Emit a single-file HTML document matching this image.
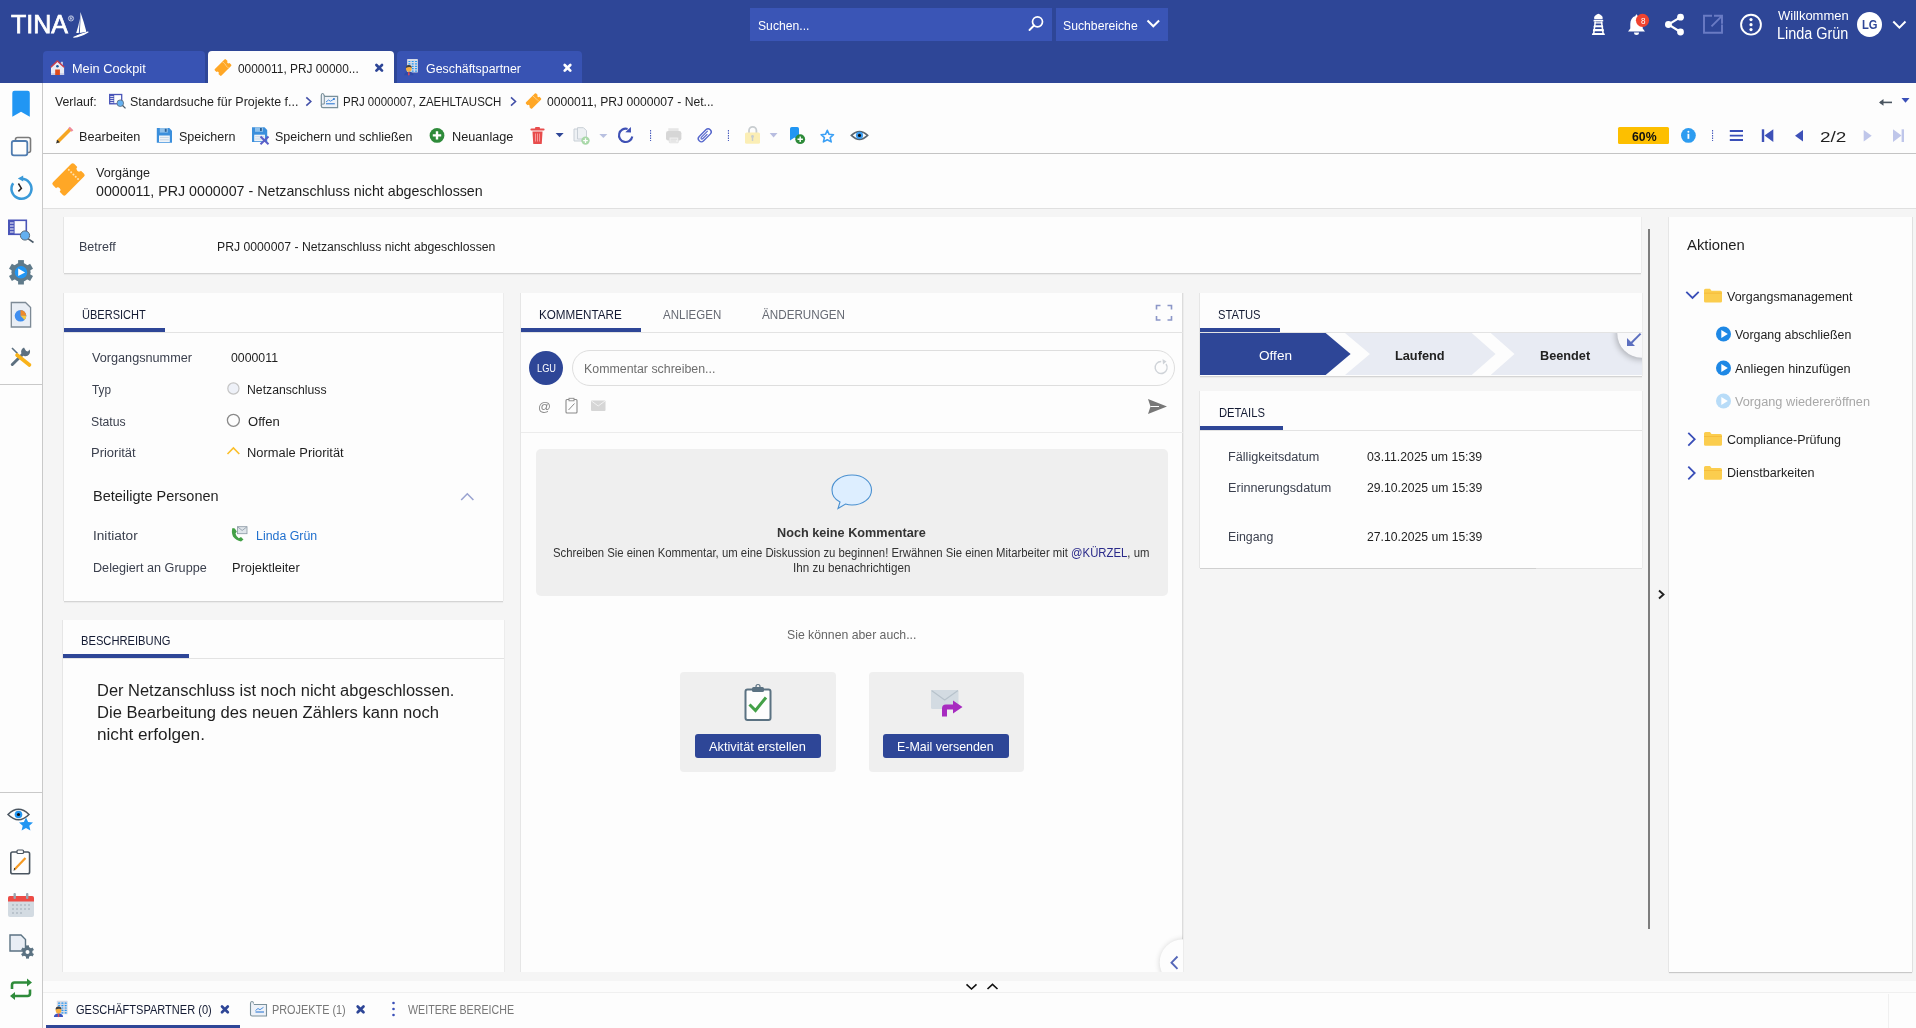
<!DOCTYPE html>
<html><head><meta charset="utf-8">
<style>
*{box-sizing:border-box;margin:0;padding:0}
html,body{width:1916px;height:1028px;overflow:hidden;background:#f5f5f5;font-family:"Liberation Sans",sans-serif;color:#1f1f1f}
.a{position:absolute;white-space:nowrap}
.b{position:absolute}
.card{position:absolute;background:#fdfdfd;box-shadow:-1px 0 0 #e6e6e6,1px 0 0 #ececec,0 1px 0 #d4d4d4,0 2px 1px rgba(0,0,0,.04)}
.sep{position:absolute;height:1px;background:#e3e3e3}
.ul{position:absolute;height:4px;background:#2e4697}
svg.a{overflow:visible}
.card.nb{box-shadow:-1px 0 0 #e6e6e6,1px 0 0 #ececec}
</style></head><body>
<div class="b" style="left:0;top:0;width:1916px;height:83px;background:#2e4697"></div>
<div class="b" style="left:750px;top:8px;width:302px;height:33px;background:#3a55b6"></div>
<div class="b" style="left:1056px;top:8px;width:112px;height:33px;background:#3a55b6"></div>
<div class="b" style="left:43px;top:51px;width:162px;height:32px;background:#3853b3;border-radius:4px 4px 0 0"></div>
<div class="b" style="left:208px;top:51px;width:186px;height:32px;background:#fdfdfd;border-radius:4px 4px 0 0"></div>
<div class="b" style="left:397px;top:51px;width:185px;height:32px;background:#3853b3;border-radius:4px 4px 0 0"></div>
<div class="b" style="left:0;top:83px;width:42px;height:945px;background:#fdfdfd"></div>
<div class="b" style="left:42px;top:83px;width:1px;height:945px;background:#c9c9c9"></div>
<div class="b" style="left:0;top:384px;width:42px;height:1px;background:#c9c9c9"></div>
<div class="b" style="left:0;top:792px;width:42px;height:1px;background:#c9c9c9"></div>
<div class="b" style="left:43px;top:83px;width:1873px;height:125px;background:#fdfdfd"></div>
<div class="b" style="left:43px;top:153px;width:1873px;height:1px;background:#c4c4c4"></div>
<div class="b" style="left:43px;top:208px;width:1873px;height:1px;background:#e0e0e0"></div>
<!-- betreff -->
<div class="card" style="left:64px;top:217px;width:1577px;height:56px"></div>
<!-- uebersicht -->
<div class="card" style="left:64px;top:293px;width:439px;height:308px"></div>
<div class="sep" style="left:64px;top:332px;width:439px"></div>
<div class="ul" style="left:64px;top:328px;width:101px"></div>
<!-- beschreibung -->
<div class="card nb" style="left:63px;top:620px;width:441px;height:352px"></div>
<div class="sep" style="left:63px;top:658px;width:441px"></div>
<div class="ul" style="left:63px;top:654px;width:126px"></div>
<!-- kommentare -->
<div class="card nb" style="left:521px;top:293px;width:662px;height:679px;border-right:1px solid #dcdcdc"></div>
<div class="sep" style="left:521px;top:332px;width:662px"></div>
<div class="ul" style="left:521px;top:328px;width:120px"></div>
<div class="b" style="left:572px;top:350px;width:603px;height:36px;border:1px solid #dedede;border-radius:18px;background:#fdfdfd"></div>
<div class="sep" style="left:521px;top:432px;width:662px;background:#ececec"></div>
<div class="b" style="left:536px;top:449px;width:632px;height:147px;background:#efefef;border-radius:5px"></div>
<div class="b" style="left:680px;top:672px;width:156px;height:100px;background:#efefef;border-radius:4px"></div>
<div class="b" style="left:869px;top:672px;width:155px;height:100px;background:#efefef;border-radius:4px"></div>
<div class="b" style="left:695px;top:734px;width:126px;height:24px;background:#2e4697;border-radius:3px"></div>
<div class="b" style="left:883px;top:734px;width:126px;height:24px;background:#2e4697;border-radius:3px"></div>
<!-- status -->
<div class="card" style="left:1200px;top:293px;width:442px;height:83px"></div>
<div class="sep" style="left:1200px;top:332px;width:442px"></div>
<div class="ul" style="left:1200px;top:328px;width:80px"></div>
<!-- details -->
<div class="card" style="left:1200px;top:391px;width:442px;height:177px;box-shadow:-1px 0 0 #e6e6e6,1px 0 0 #ececec,0 1px 0 #e2e2e2"></div>
<div class="b" style="left:1200px;top:568px;width:336px;height:1px;background:#d0d0d0"></div>
<div class="sep" style="left:1200px;top:430px;width:442px"></div>
<div class="ul" style="left:1200px;top:426px;width:83px"></div>
<!-- splitter -->
<div class="b" style="left:1648px;top:229px;width:2px;height:700px;background:#7d7d7d"></div>
<!-- aktionen -->
<div class="card" style="left:1669px;top:217px;width:243px;height:755px;box-shadow:-1px 0 0 #e6e6e6,1px 0 0 #e0e0e0,0 1px 1px rgba(0,0,0,.18)"></div>
<!-- bottom -->
<div class="b" style="left:43px;top:981px;width:1873px;height:11px;background:#fcfcfc"></div>
<div class="b" style="left:43px;top:992px;width:1873px;height:1px;background:#f0f0f0"></div>
<div class="b" style="left:43px;top:993px;width:1873px;height:35px;background:#fdfdfd"></div>
<div class="b" style="left:46px;top:1025px;width:194px;height:3px;background:#2e4697"></div>
<div class="b" style="left:1888px;top:994px;width:1px;height:34px;background:#f0f0f0"></div>
<svg class="b" style="left:0;top:0" width="1916" height="1028" viewBox="0 0 1916 1028"><path d="M80.4 12 Q84 22 86.4 31.8 L79.8 33.1 Q80.6 22 80.4 12Z" fill="#fff"/>
<path d="M79.9 18.5 Q78.5 26 76.2 33.1 L78.8 33 Q79.6 26 79.9 18.5Z" fill="#fff"/>
<path d="M73.8 37.2 Q81 36.5 88 32 Q80 34.3 73.8 37.2Z" fill="#fff" stroke="#fff" stroke-width="1.1" stroke-linejoin="round"/>
<circle cx="71" cy="18.4" r="2.6" fill="none" stroke="#e8ecf8" stroke-width="0.7"/><path d="M70.2 20 V16.9 H71.5 Q72.4 16.9 72.4 17.7 Q72.4 18.5 71.5 18.5 H70.2 M71.4 18.5 L72.4 20" fill="none" stroke="#e8ecf8" stroke-width="0.6"/>
<circle cx="1037.5" cy="21.8" r="5" fill="none" stroke="#fff" stroke-width="1.7"/><path d="M1034 25.5 L1029.5 30" stroke="#fff" stroke-width="1.9" stroke-linecap="round"/>
<path d="M1147.5 20.5 L1153.3 26.3 L1159.1 20.5" fill="none" stroke="#fff" stroke-width="2"/>
<g fill="#fff"><path d="M1598.4 13.8 Q1602.3 15.2 1602.6 17.5 L1602.6 19.2 H1594.2 L1594.2 17.5 Q1594.5 15.2 1598.4 13.8Z"/>
<rect x="1593.6" y="19.9" width="9.6" height="1.6"/>
<path d="M1594.6 22.3 H1602.2 L1602.6 23.5 H1594.2Z"/><path d="M1594 25.3 H1602.8 L1603.3 27.3 H1593.5Z"/><path d="M1593.3 29 H1603.5 L1604 31.2 H1592.8Z"/><path d="M1592.6 33 H1604.2 L1605 35.1 H1591.8Z"/>
<path d="M1594.6 21.5 L1596.1 21.5 L1594.3 35 L1592.7 35Z"/><path d="M1602.2 21.5 L1600.7 21.5 L1602.5 35 L1604.1 35Z"/></g>
<path d="M1636.5 14.5 C1636 14.5 1635.5 15 1635.5 16 C1632 17 1630.3 20 1630.3 24 L1630.3 28.5 L1628 31.5 L1645 31.5 L1642.7 28.5 L1642.7 24 C1642.7 20 1641 17 1637.5 16 C1637.5 15 1637 14.5 1636.5 14.5Z" fill="#fff"/>
<path d="M1634 32.5 A2.5 2.5 0 0 0 1639 32.5Z" fill="#fff"/>
<circle cx="1642.5" cy="20.3" r="6.6" fill="#f0432f"/>
<g fill="#fff"><circle cx="1680.5" cy="17.2" r="3.4"/><circle cx="1668.4" cy="24.5" r="3.4"/><circle cx="1680.5" cy="32" r="3.4"/></g><path d="M1680.5 17.2 L1668.4 24.5 L1680.5 32" fill="none" stroke="#fff" stroke-width="2.1"/>
<path d="M1712 15.8 H1704 V32.7 H1722 V24.5" fill="none" stroke="#6a7bc4" stroke-width="1.9"/><path d="M1714 15.8 H1722 V23.8 M1722 15.8 L1711.5 26.3" fill="none" stroke="#6a7bc4" stroke-width="1.9"/>
<circle cx="1751" cy="24.7" r="9.9" fill="none" stroke="#fff" stroke-width="1.9"/><g fill="#fff"><circle cx="1751" cy="19.6" r="1.6"/><circle cx="1751" cy="24.7" r="1.6"/><circle cx="1751" cy="29.6" r="1.6"/></g>
<circle cx="1869.5" cy="24.5" r="12.5" fill="#fff"/>
<path d="M1893.3 21.5 L1899.4 27.6 L1905.5 21.5" fill="none" stroke="#fff" stroke-width="2"/>
<rect x="60.8" y="61.8" width="2.1" height="3.5" fill="#c5cde8"/>
<path d="M51 67.2 L57.4 61.2 L64.1 67.2 V75 H51Z" fill="#e8ebf5"/>
<path d="M50.8 67.2 L57.4 61 L64.2 67.2" fill="none" stroke="#c63e4c" stroke-width="1.5" stroke-linejoin="round"/>
<rect x="51" y="73.2" width="13.1" height="1.8" fill="#c8cde6"/>
<rect x="55.2" y="69.5" width="4.7" height="5.5" fill="#de4a1c"/><circle cx="57.4" cy="66.3" r="1.3" fill="#1a5a9a"/>
<g transform="translate(223,67.5) rotate(-45) scale(0.52)">
<path d="M-13 -9 H13 A2 2 0 0 1 15 -7 V-2.6 A2.6 2.6 0 0 0 15 2.6 V7 A2 2 0 0 1 13 9 H-13 A2 2 0 0 1 -15 7 V2.6 A2.6 2.6 0 0 0 -15 -2.6 V-7 A2 2 0 0 1 -13 -9Z" fill="#ffa726"/>
<g fill="#ffe2b0"><circle cx="7" cy="-6.5" r="1"/><circle cx="7" cy="-3.2" r="1"/><circle cx="7" cy="0" r="1"/><circle cx="7" cy="3.2" r="1"/><circle cx="7" cy="6.5" r="1"/></g></g>
<path d="M376.4 65 L382 70.6 M382 65 L376.4 70.6" stroke="#2e4697" stroke-width="2.7" stroke-linecap="round"/>
<rect x="407.1" y="59.1" width="10.8" height="13.5" rx="0.6" fill="#d5dae6"/><rect x="408.3" y="60.9" width="2.2" height="1.2" rx="0.6" fill="#2196f3"/><rect x="411.6" y="60.9" width="2.2" height="1.2" rx="0.6" fill="#2196f3"/><rect x="414.9" y="60.9" width="2.2" height="1.2" rx="0.6" fill="#2196f3"/><rect x="408.3" y="63.3" width="2.2" height="1.2" rx="0.6" fill="#2196f3"/><rect x="411.6" y="63.3" width="2.2" height="1.2" rx="0.6" fill="#2196f3"/><rect x="414.9" y="63.3" width="2.2" height="1.2" rx="0.6" fill="#2196f3"/><rect x="408.3" y="65.7" width="2.2" height="1.2" rx="0.6" fill="#2196f3"/><rect x="411.6" y="65.7" width="2.2" height="1.2" rx="0.6" fill="#2196f3"/><rect x="414.9" y="65.7" width="2.2" height="1.2" rx="0.6" fill="#2196f3"/><rect x="408.3" y="68.1" width="2.2" height="1.2" rx="0.6" fill="#2196f3"/><rect x="411.6" y="68.1" width="2.2" height="1.2" rx="0.6" fill="#2196f3"/><rect x="414.9" y="68.1" width="2.2" height="1.2" rx="0.6" fill="#2196f3"/><rect x="408.3" y="70.5" width="2.2" height="1.2" rx="0.6" fill="#2196f3"/><rect x="411.6" y="70.5" width="2.2" height="1.2" rx="0.6" fill="#2196f3"/><rect x="414.9" y="70.5" width="2.2" height="1.2" rx="0.6" fill="#2196f3"/><path d="M404.2 75.3 Q404.2 71.7 408.8 71.7 Q413.40000000000003 71.7 413.40000000000003 75.3Z" fill="#2f4aa8"/><path d="M408.2 71.9 H409.40000000000003 L409.7 74.9 L408.8 75.5 L407.90000000000003 74.9Z" fill="#d94a5a"/><ellipse cx="408.8" cy="68.5" rx="2.8" ry="3.2" fill="#f8b040"/><path d="M405.90000000000003 67.9 Q405.8 64.9 408.8 64.9 Q411.8 64.9 411.7 67.9 Q409.8 66.3 405.90000000000003 67.9Z" fill="#3a3f48"/>
<path d="M564.7 65 L570.3 70.6 M570.3 65 L564.7 70.6" stroke="#fff" stroke-width="2.7" stroke-linecap="round"/>
<path d="M12.3 93 Q12.3 90.8 14.5 90.8 H27.6 Q29.8 90.8 29.8 93 V116.7 L21 111.8 L12.3 116.7Z" fill="#2196f3"/>
<rect x="15.5" y="137.5" width="15" height="15" rx="2" fill="none" stroke="#7a7a7a" stroke-width="1.6"/><rect x="11.8" y="141" width="15.5" height="14.3" rx="2" fill="#fdfdfd" stroke="#4f7cb0" stroke-width="1.8"/>
<path d="M21.5 178.8 A10 10 0 1 1 13.2 183.2" fill="none" stroke="#3a9ad9" stroke-width="2.5"/><path d="M17.8 178.6 L23.2 175.6 L23.2 181.6Z" fill="#3a9ad9"/><path d="M18.4 183.5 L21.4 188.4 L18.4 191.4" fill="none" stroke="#2a2222" stroke-width="1.5"/>
<rect x="8.8" y="220.3" width="17.5" height="14" fill="#fdfdfd" stroke="#4a55b8" stroke-width="1.6"/><rect x="8.8" y="220.3" width="5.8" height="14" fill="#4a55b8"/>
<g stroke="#fdfdfd" stroke-width="1"><path d="M10 223 H13.6 M10 226 H13.6 M10 229 H13.6 M10 232 H13.6"/></g>
<circle cx="25" cy="235.5" r="4.6" fill="#64b0f0" stroke="#5a6a78" stroke-width="1"/><path d="M28.3 238.8 L33.5 242.5" stroke="#4a5a68" stroke-width="1.6"/>
<circle cx="21" cy="272.3" r="9.6" fill="#5f7a8a"/><rect x="18.1" y="260.1" width="5.8" height="12.2" fill="#5f7a8a" transform="rotate(0.0 21 272.3)"/><rect x="18.1" y="260.1" width="5.8" height="12.2" fill="#5f7a8a" transform="rotate(60.0 21 272.3)"/><rect x="18.1" y="260.1" width="5.8" height="12.2" fill="#5f7a8a" transform="rotate(120.0 21 272.3)"/><rect x="18.1" y="260.1" width="5.8" height="12.2" fill="#5f7a8a" transform="rotate(180.0 21 272.3)"/><rect x="18.1" y="260.1" width="5.8" height="12.2" fill="#5f7a8a" transform="rotate(240.0 21 272.3)"/><rect x="18.1" y="260.1" width="5.8" height="12.2" fill="#5f7a8a" transform="rotate(300.0 21 272.3)"/>
<circle cx="21" cy="272.3" r="6.2" fill="#2196f3"/><path d="M18.2 268.6 L25.1 272.4 L18.2 276.1Z" fill="#fff"/>
<path d="M11.3 302.5 H25.5 L30.6 307.6 V327 H11.3Z" fill="#e9eef5" stroke="#7d8a96" stroke-width="1.3"/><circle cx="20.5" cy="315.8" r="5.8" fill="#3f8ef0"/><path d="M20.5 315.8 V310 A5.8 5.8 0 0 1 26.3 315.8Z" fill="#ef8a2a"/><path d="M20.5 315.8 H26.3 A5.8 5.8 0 0 1 24.6 319.9Z" fill="#f7c940"/>
<path d="M12 348 L17.5 353.5" stroke="#5d7080" stroke-width="1.6"/><path d="M18 354 L12.5 364.5" stroke="#5d7080" stroke-width="0"/><path d="M29.5 349.5 A4.5 4.5 0 1 1 24 347.5 L26 351 L28 351.5Z" fill="#5d7080"/><path d="M25 352 L12.3 364.5" stroke="#5d7080" stroke-width="3" stroke-linecap="round"/><path d="M17 355 L29.5 365" stroke="#f9b31a" stroke-width="3.6" stroke-linecap="round"/>
<path d="M8 814.5 Q18.5 804 29 814.5 Q18.5 825 8 814.5Z" fill="#fdfdfd" stroke="#4a5560" stroke-width="1.5"/><circle cx="18.5" cy="814.5" r="3.8" fill="#2196f3"/><circle cx="18.5" cy="814.5" r="1.6" fill="#111"/>
<path d="M26 817.5 L28.1 822.1 L33 822.5 L29.3 825.8 L30.4 830.6 L26 828.1 L21.6 830.6 L22.7 825.8 L19 822.5 L23.9 822.1Z" fill="#2196f3"/>
<rect x="10.8" y="852" width="18.8" height="21.8" rx="1.8" fill="#fdfdfd" stroke="#4a5560" stroke-width="1.6"/><rect x="17" y="850" width="6.5" height="3.5" rx="1" fill="#fdfdfd" stroke="#4a5560" stroke-width="1.2"/><path d="M14.5 869.5 L25.5 858" stroke="#f59a23" stroke-width="2.2"/><path d="M14 870.5 L14.8 868" stroke="#333" stroke-width="1"/>
<rect x="8" y="896" width="26" height="21" rx="2" fill="#d3dbe2"/><path d="M8 898 Q8 896 10 896 H32 Q34 896 34 898 V901.5 H8Z" fill="#ee4b45"/><rect x="13.5" y="893" width="2.4" height="6" rx="1" fill="#9aa5b0"/><rect x="26" y="893" width="2.4" height="6" rx="1" fill="#9aa5b0"/><g fill="#9aa5b0"><circle cx="13" cy="905" r=".8"/><circle cx="17" cy="905" r=".8"/><circle cx="21" cy="905" r=".8"/><circle cx="25" cy="905" r=".8"/><circle cx="29" cy="905" r=".8"/><circle cx="13" cy="909" r=".8"/><circle cx="17" cy="909" r=".8"/><circle cx="21" cy="909" r=".8"/><circle cx="25" cy="909" r=".8"/><circle cx="29" cy="909" r=".8"/><circle cx="13" cy="913" r=".8"/><circle cx="17" cy="913" r=".8"/><circle cx="21" cy="913" r=".8"/></g>
<path d="M10 935 H21 L25.5 939.5 V951 H10Z" fill="#e9eef5" stroke="#5b7282" stroke-width="1.4"/>
<circle cx="27.5" cy="952" r="5.0" fill="#5b7282"/><rect x="26.0" y="945.4" width="3.0" height="6.6" fill="#5b7282" transform="rotate(0.0 27.5 952)"/><rect x="26.0" y="945.4" width="3.0" height="6.6" fill="#5b7282" transform="rotate(60.0 27.5 952)"/><rect x="26.0" y="945.4" width="3.0" height="6.6" fill="#5b7282" transform="rotate(120.0 27.5 952)"/><rect x="26.0" y="945.4" width="3.0" height="6.6" fill="#5b7282" transform="rotate(180.0 27.5 952)"/><rect x="26.0" y="945.4" width="3.0" height="6.6" fill="#5b7282" transform="rotate(240.0 27.5 952)"/><rect x="26.0" y="945.4" width="3.0" height="6.6" fill="#5b7282" transform="rotate(300.0 27.5 952)"/>
<circle cx="27.5" cy="952" r="2" fill="#fdfdfd"/>
<path d="M12 989 V985 Q12 982.5 14.5 982.5 H28" fill="none" stroke="#2e8b3a" stroke-width="2.6"/><path d="M27 978.5 L32 982.5 L27 986.5Z" fill="#2e8b3a"/><path d="M30 989.5 V993.5 Q30 996 27.5 996 H14" fill="none" stroke="#2e8b3a" stroke-width="2.6"/><path d="M15 992 L10 996 L15 1000Z" fill="#2e8b3a"/>
<rect x="109.7" y="94.5" width="12" height="9.3" fill="#fdfdfd" stroke="#4a55b8" stroke-width="1.3"/><rect x="109.7" y="94.5" width="4.5" height="9.3" fill="#4a55b8"/>
<g stroke="#fdfdfd" stroke-width=".8"><path d="M110.3 96.5 H113.5 M110.3 98.5 H113.5 M110.3 100.5 H113.5 M110.3 102.5 H113.5"/></g>
<circle cx="120.3" cy="103.2" r="3.3" fill="#64b0f0" stroke="#5a6a78" stroke-width=".8"/><path d="M122.6 105.5 L125.5 108.4" stroke="#4a5a68" stroke-width="1.2"/>
<path d="M306.3 97.3 L310.8 101.5 L306.3 105.6" fill="none" stroke="#4350a8" stroke-width="1.6"/>
<path d="M324 95.5 Q324 93.5 322.5 93.5 Q321.3 93.5 321.3 95.5 V106 Q321.3 107.6 323 107.6 H337.6 V96.3 H324.3" fill="#eef2f8" stroke="#7a909a" stroke-width="1.2"/>
<path d="M321.3 105.5 Q321.3 104 322.8 104 H324.3 V95" fill="none" stroke="#7a909a" stroke-width="1"/>
<path d="M326 103.8 H334.8" stroke="#1e6fd0" stroke-width="1"/><path d="M326 102 L328.5 100 L330.5 101.2 L334 99" fill="none" stroke="#4a90e0" stroke-width="1"/><circle cx="334" cy="99" r=".9" fill="#1e6fd0"/>
<path d="M511 97.3 L515.5 101.5 L511 105.6" fill="none" stroke="#4350a8" stroke-width="1.6"/>
<g transform="translate(533.5,101) rotate(-45) scale(0.48)">
<path d="M-13 -9 H13 A2 2 0 0 1 15 -7 V-2.6 A2.6 2.6 0 0 0 15 2.6 V7 A2 2 0 0 1 13 9 H-13 A2 2 0 0 1 -15 7 V2.6 A2.6 2.6 0 0 0 -15 -2.6 V-7 A2 2 0 0 1 -13 -9Z" fill="#ffa726"/>
<g fill="#ffe2b0"><circle cx="7" cy="-6.5" r="1"/><circle cx="7" cy="-3.2" r="1"/><circle cx="7" cy="0" r="1"/><circle cx="7" cy="3.2" r="1"/><circle cx="7" cy="6.5" r="1"/></g></g>
<path d="M57.5 142 L70.5 129" stroke="#f5a623" stroke-width="3.6"/><path d="M69 127.5 L72.5 131" stroke="#ef8a9a" stroke-width="2.4"/><path d="M56 143.6 L57.3 139.8 L59.8 142.2Z" fill="#333"/>
<path d="M156.8 128 H169.3 L172.0 130.7 V142.8 H156.8 Z" fill="#3b8fdc"/><rect x="159.8" y="128" width="8" height="4.6" fill="#8fc0ea"/><rect x="164.8" y="128.8" width="1.8" height="3" fill="#2b5f94"/><rect x="159.0" y="135.5" width="10.8" height="6.5" fill="#eef3f8"/><path d="M160.0 137.5 H168.8 M160.0 139.8 H168.8" stroke="#b8cbe0" stroke-width=".7"/>
<path d="M252 127.2 H264.5 L267.2 129.9 V142.0 H252 Z" fill="#3b8fdc"/><rect x="255" y="127.2" width="8" height="4.6" fill="#8fc0ea"/><rect x="260" y="128.0" width="1.8" height="3" fill="#2b5f94"/><rect x="254.2" y="134.7" width="10.8" height="6.5" fill="#eef3f8"/><path d="M255.2 136.7 H264 M255.2 139.0 H264" stroke="#b8cbe0" stroke-width=".7"/>
<path d="M260.5 136.5 L268.5 144.2 M268.5 136.5 L260.5 144.2" stroke="#5a5fc8" stroke-width="2"/>
<circle cx="437" cy="135.4" r="7.4" fill="#2e8b3a"/><path d="M437 131.2 V139.6 M432.8 135.4 H441.2" stroke="#fff" stroke-width="2.4"/>
<path d="M531.5 129.5 H543.5" stroke="#e84d4d" stroke-width="2.2" stroke-linecap="round"/><rect x="535" y="127" width="5" height="2.5" rx="1" fill="#e84d4d"/><path d="M532.5 131.5 H542.5 L541.8 143.5 Q541.7 144 541 144 H534 Q533.3 144 533.2 143.5Z" fill="#e84d4d"/><path d="M535.5 133.5 V141.5 M537.5 133.5 V141.5 M539.5 133.5 V141.5" stroke="#f8a0a0" stroke-width=".9"/>
<path d="M555.6 133 H563.6 L559.6 137.3Z" fill="#2e4697"/>
<path d="M574 129 H580 L583 132 V141 H574Z" fill="#eef1f4" stroke="#c8cfd6" stroke-width="1"/><path d="M577.5 127.7 H583.5 L586.5 130.7 V139 H577.5Z" fill="#eef1f4" stroke="#c8cfd6" stroke-width="1"/><circle cx="585.5" cy="140.6" r="4.2" fill="#a8d8a8"/><path d="M585.5 138.3 V142.9 M583.2 140.6 H587.8" stroke="#fff" stroke-width="1.3"/>
<path d="M599.3 134 H607.4 L603.4 138Z" fill="#b8c0e0"/>
<path d="M632.3 136.5 A6.7 6.7 0 1 1 627.6 128.9" fill="none" stroke="#3f51b5" stroke-width="2.1"/><path d="M630.9 126.9 L631 132.6 L625.3 132.2Z" fill="#3f51b5"/>
<path d="M650.6 130 V141" stroke="#3a4fb8" stroke-width="1" stroke-dasharray="1.5 1"/>
<path d="M668.3 128.2 H678.6 V132 H668.3Z" fill="#e6e6e6"/><rect x="666" y="131" width="15.4" height="9.5" rx="2.2" fill="#d6d6d6"/><rect x="669.2" y="137.2" width="9.2" height="5.6" rx=".8" fill="#efefef" stroke="#d8d8d8" stroke-width=".6"/><path d="M670.5 139.2 H677 M670.5 141 H676" stroke="#d0d0d0" stroke-width=".6"/>
<g transform="rotate(-45 704.6 135.4)"><rect x="697" y="132.3" width="15.6" height="6.2" rx="3.1" fill="none" stroke="#5566cc" stroke-width="1.4"/><path d="M710 134.4 H701.2 Q699.8 134.4 699.8 135.4 Q699.8 136.4 701.2 136.4 H707.5" fill="none" stroke="#5566cc" stroke-width="1.1"/></g>
<path d="M728.4 130 V141" stroke="#3a4fb8" stroke-width="1" stroke-dasharray="1.5 1"/>
<path d="M749 133 V130.5 A3.7 3.7 0 0 1 756.4 130.5 V133" fill="none" stroke="#c8cdd0" stroke-width="1.8"/><rect x="745" y="132.4" width="15" height="11.4" rx="1.5" fill="#fbeeb5"/><circle cx="752.5" cy="136.5" r="1.4" fill="#c8cdd0"/><rect x="751.8" y="136.5" width="1.4" height="4.5" fill="#c8cdd0"/>
<path d="M769.7 133 H777.5 L773.6 137.5Z" fill="#b8bde0"/>
<path d="M790 128.8 Q790 127 791.8 127 H797.3 Q799 127 799 128.8 V140.5 L794.5 137.5 L790 140.5Z" fill="#2196f3"/><circle cx="800.2" cy="139.2" r="4.9" fill="#2e8b3a"/><path d="M800.2 136.5 V141.9 M797.5 139.2 H802.9" stroke="#fff" stroke-width="1.4"/>
<path d="M827.3 130.3 L829.1 134.3 L833.5 134.7 L830.2 137.6 L831.2 141.9 L827.3 139.7 L823.4 141.9 L824.4 137.6 L821.1 134.7 L825.5 134.3Z" fill="none" stroke="#3ba0f5" stroke-width="1.6" stroke-linejoin="round"/>
<path d="M851.3 135.4 Q859.5 127.5 867.7 135.4 Q859.5 143.3 851.3 135.4Z" fill="#fdfdfd" stroke="#5a6670" stroke-width="1.5"/><circle cx="859.5" cy="135.4" r="3.6" fill="#3b9cf0"/><circle cx="859.5" cy="135.4" r="1.6" fill="#111"/>
<path d="M1880 102.4 H1892" stroke="#4a5560" stroke-width="1.6"/><path d="M1879 102.4 L1883.5 99 V105.8Z" fill="#4a5560"/>
<path d="M1901.5 98 H1909.5 L1905.5 102.7Z" fill="#3a4fb8"/>
<rect x="1618" y="127" width="51" height="17" rx="1.5" fill="#fdbf00"/>
<circle cx="1688.4" cy="135.4" r="7.4" fill="#2d9cf0"/><circle cx="1688.4" cy="131.8" r="1" fill="#fff"/><rect x="1687.5" y="133.8" width="1.8" height="5" fill="#fff"/>
<path d="M1712.6 130 V141" stroke="#3a4fb8" stroke-width="1" stroke-dasharray="1.5 1"/>
<path d="M1729.8 131 H1743 M1729.8 135.6 H1743 M1729.8 140 H1743" stroke="#3a4fb8" stroke-width="1.8"/>
<rect x="1761.8" y="129.3" width="2.4" height="12.7" fill="#3e51b8"/><path d="M1773.3 129.3 V142 L1764.5 135.6Z" fill="#3e51b8"/>
<path d="M1803 130 V141.6 L1795 135.8Z" fill="#3e51b8"/>
<path d="M1863.7 130 V141.6 L1871.7 135.8Z" fill="#bfc6ea"/>
<path d="M1893 129.3 V142 L1901.5 135.6Z" fill="#bfc6ea"/><rect x="1901.6" y="129.3" width="2.4" height="12.7" fill="#bfc6ea"/>
<g transform="translate(68.5,179.4) rotate(-45) scale(1.0)">
<path d="M-13 -9 H13 A2 2 0 0 1 15 -7 V-2.6 A2.6 2.6 0 0 0 15 2.6 V7 A2 2 0 0 1 13 9 H-13 A2 2 0 0 1 -15 7 V2.6 A2.6 2.6 0 0 0 -15 -2.6 V-7 A2 2 0 0 1 -13 -9Z" fill="#ffa726"/>
<g fill="#ffe2b0"><circle cx="7" cy="-6.5" r="1"/><circle cx="7" cy="-3.2" r="1"/><circle cx="7" cy="0" r="1"/><circle cx="7" cy="3.2" r="1"/><circle cx="7" cy="6.5" r="1"/></g></g>
<circle cx="233.4" cy="388.5" r="5.6" fill="#eef1f8" stroke="#c4c4c4" stroke-width="1.2"/>
<circle cx="233.4" cy="420.3" r="6" fill="none" stroke="#8a8a8a" stroke-width="1.3"/>
<path d="M227.5 454 L233.4 448 L239.3 454" fill="none" stroke="#fbbf2a" stroke-width="1.6"/>
<path d="M461.2 500 L467.3 493.8 L473.4 500" fill="none" stroke="#9aa3d0" stroke-width="1.6"/>
<path d="M232.5 528 Q231 532 233 536.5 Q236 540.5 241 541.5 L243.5 539.5 L241 537 L238.8 538.2 Q236 536.5 235.5 533.5 L236.8 531.5 L234.8 528.5Z" fill="#43a047"/><rect x="237.5" y="526.7" width="9.5" height="7" fill="#dfe5ea" stroke="#8a98a4" stroke-width=".8"/><path d="M237.8 527 L242.2 530.5 L246.7 527" fill="none" stroke="#8a98a4" stroke-width=".8"/>
<path d="M1156.5 309.5 V305.5 H1160.5 M1167.5 305.5 H1171.5 V309.5 M1171.5 316 V320 H1167.5 M1160.5 320 H1156.5 V316" fill="none" stroke="#8c97c8" stroke-width="1.6"/>
<circle cx="546" cy="368" r="17" fill="#2e4697"/>
<path d="M1166 364 A6 6 0 1 1 1161.2 361.5" fill="none" stroke="#cfd3d8" stroke-width="1.4"/><path d="M1162.5 359 L1166.5 361.5 L1163 364.5Z" fill="#cfd3d8"/>
<rect x="566" y="399.5" width="11" height="13.5" rx="1" fill="none" stroke="#8a8a8a" stroke-width="1.1"/><rect x="569" y="398.3" width="5" height="2.5" fill="#fdfdfd" stroke="#8a8a8a" stroke-width=".9"/><path d="M568.5 410 L574.5 403.5" stroke="#8a8a8a" stroke-width="1"/>
<rect x="591" y="400.5" width="14.5" height="10.5" rx="1" fill="#d6d6d6"/><path d="M591.5 401 L598.2 406 L605 401" fill="none" stroke="#f2f2f2" stroke-width="1"/>
<path d="M1148 399 L1167 406.5 L1148 414 L1150.5 406.5Z" fill="#777"/><path d="M1150.5 406.5 H1159" stroke="#fdfdfd" stroke-width="1"/>
<path d="M852 475 C863 475 871.5 481.5 871.5 490 C871.5 498.5 863 505 852 505 C849.5 505 847.5 504.7 845.5 504 L838 508.5 L840 502 C835 499.5 832 495 832 490 C832 481.5 841 475 852 475Z" fill="#ddeeff" stroke="#4a90d0" stroke-width="1.1"/>
<rect x="745.5" y="689.5" width="25" height="30.5" rx="2" fill="#fdfdfd" stroke="#5b7282" stroke-width="2"/><rect x="752" y="687" width="12" height="5" rx="1.5" fill="#5b7282"/><circle cx="758" cy="686.5" r="2" fill="none" stroke="#5b7282" stroke-width="1.2"/><path d="M749.5 704.5 L755.5 710.5 L766 697.5" fill="none" stroke="#43a047" stroke-width="3"/>
<rect x="931" y="690" width="27.5" height="19" rx="1.5" fill="#d3dbe2"/><path d="M931.5 690.5 L944.7 700 L958 690.5" fill="none" stroke="#b7c2cb" stroke-width="1.2"/><path d="M942 716.5 V708.5 Q942 704.5 946 704.5 H953 V700.5 L962.5 707 L953 713.5 V709.5 H947 V716.5Z" fill="#a72bc0"/>
<defs><filter id="sh" x="-50%" y="-50%" width="200%" height="200%"><feGaussianBlur stdDeviation="3"/></filter><clipPath id="ck"><rect x="1100" y="900" width="83" height="72"/></clipPath><clipPath id="cs"><rect x="1590" y="333" width="52" height="42"/></clipPath></defs>
<g clip-path="url(#ck)"><circle cx="1184" cy="963.5" r="23.5" fill="#000" opacity=".22" filter="url(#sh)"/><circle cx="1183" cy="962.5" r="23.3" fill="#fdfdfd"/></g><path d="M1177.5 956.5 L1171.5 962.7 L1177.5 968.8" fill="none" stroke="#5567b8" stroke-width="1.9"/>
<path d="M1200 333 H1325.6 L1350.6 354 L1325.6 375 H1200Z" fill="#2e4697"/>
<path d="M1345 333 H1471.7 L1495.5 354 L1471.7 375 H1345 L1370 354Z" fill="#e8ebf3"/>
<path d="M1490.7 333 H1642 V375 H1490.7 L1514.5 354Z" fill="#e8ebf3"/>
<g clip-path="url(#cs)"><circle cx="1640.5" cy="335" r="24.5" fill="#000" opacity=".25" filter="url(#sh)"/><circle cx="1641.5" cy="333.5" r="24.2" fill="#f8f8fa"/></g><path d="M1640.6 333.6 L1630 344.2" stroke="#5c6fbf" stroke-width="2"/><path d="M1627 338 V346 H1635Z" fill="#5c6fbf"/>
<path d="M1686.3 291.8 L1692.5 298 L1698.7 291.8" fill="none" stroke="#3a4fb8" stroke-width="1.8"/>
<path d="M1704 290.2 Q1704 288.7 1705.5 288.7 H1710 L1711.5 290.7 H1720.5 Q1722 290.7 1722 292.2 V301.2 Q1722 302.5 1720.5 302.5 H1705.5 Q1704 302.5 1704 301.2Z" fill="#fbcd4e"/><path d="M1704 293.2 H1722" stroke="#f5b936" stroke-width=".8"/>
<circle cx="1723.5" cy="334" r="7.5" fill="#1e88e5"/><path d="M1721.3 330 L1727.8 334 L1721.3 338Z" fill="#fff"/>
<circle cx="1723.5" cy="368" r="7.5" fill="#1e88e5"/><path d="M1721.3 364 L1727.8 368 L1721.3 372Z" fill="#fff"/>
<circle cx="1723.5" cy="401" r="7.5" fill="#b8dcf8"/><path d="M1721.3 397 L1727.8 401 L1721.3 405Z" fill="#fff"/>
<path d="M1688.3 432.8 L1694.7 439.2 L1688.3 445.6" fill="none" stroke="#3a4fb8" stroke-width="1.8"/>
<path d="M1704 433.5 Q1704 432 1705.5 432 H1710 L1711.5 434 H1720.5 Q1722 434 1722 435.5 V444.5 Q1722 445.8 1720.5 445.8 H1705.5 Q1704 445.8 1704 444.5Z" fill="#fbcd4e"/><path d="M1704 436.5 H1722" stroke="#f5b936" stroke-width=".8"/>
<path d="M1688.3 466.6 L1694.7 473 L1688.3 479.4" fill="none" stroke="#3a4fb8" stroke-width="1.8"/>
<path d="M1704 467.5 Q1704 466 1705.5 466 H1710 L1711.5 468 H1720.5 Q1722 468 1722 469.5 V478.5 Q1722 479.8 1720.5 479.8 H1705.5 Q1704 479.8 1704 478.5Z" fill="#fbcd4e"/><path d="M1704 470.5 H1722" stroke="#f5b936" stroke-width=".8"/>
<path d="M1659 590.5 L1663.5 594.5 L1659 598.5" fill="none" stroke="#222" stroke-width="1.9"/>
<path d="M966.5 984.3 L971.5 989 L976.5 984.3" fill="none" stroke="#111" stroke-width="1.6"/><path d="M987.5 989 L992.5 984.3 L997.5 989" fill="none" stroke="#111" stroke-width="1.6"/>
<rect x="56.8" y="1000.8" width="10.8" height="13.5" rx="0.6" fill="#d5dae6"/><rect x="58.0" y="1002.6" width="2.2" height="1.2" rx="0.6" fill="#2196f3"/><rect x="61.3" y="1002.6" width="2.2" height="1.2" rx="0.6" fill="#2196f3"/><rect x="64.6" y="1002.6" width="2.2" height="1.2" rx="0.6" fill="#2196f3"/><rect x="58.0" y="1005.0" width="2.2" height="1.2" rx="0.6" fill="#2196f3"/><rect x="61.3" y="1005.0" width="2.2" height="1.2" rx="0.6" fill="#2196f3"/><rect x="64.6" y="1005.0" width="2.2" height="1.2" rx="0.6" fill="#2196f3"/><rect x="58.0" y="1007.4" width="2.2" height="1.2" rx="0.6" fill="#2196f3"/><rect x="61.3" y="1007.4" width="2.2" height="1.2" rx="0.6" fill="#2196f3"/><rect x="64.6" y="1007.4" width="2.2" height="1.2" rx="0.6" fill="#2196f3"/><rect x="58.0" y="1009.8" width="2.2" height="1.2" rx="0.6" fill="#2196f3"/><rect x="61.3" y="1009.8" width="2.2" height="1.2" rx="0.6" fill="#2196f3"/><rect x="64.6" y="1009.8" width="2.2" height="1.2" rx="0.6" fill="#2196f3"/><rect x="58.0" y="1012.2" width="2.2" height="1.2" rx="0.6" fill="#2196f3"/><rect x="61.3" y="1012.2" width="2.2" height="1.2" rx="0.6" fill="#2196f3"/><rect x="64.6" y="1012.2" width="2.2" height="1.2" rx="0.6" fill="#2196f3"/><path d="M53.9 1017.0 Q53.9 1013.4 58.5 1013.4 Q63.1 1013.4 63.1 1017.0Z" fill="#3a55c0"/><path d="M57.9 1013.5999999999999 H59.1 L59.4 1016.5999999999999 L58.5 1017.1999999999999 L57.6 1016.5999999999999Z" fill="#d94a5a"/><ellipse cx="58.5" cy="1010.1999999999999" rx="2.8" ry="3.2" fill="#f8b040"/><path d="M55.6 1009.5999999999999 Q55.5 1006.5999999999999 58.5 1006.5999999999999 Q61.5 1006.5999999999999 61.4 1009.5999999999999 Q59.5 1007.9999999999999 55.6 1009.5999999999999Z" fill="#3a3f48"/>
<path d="M222 1006.5 L227.8 1012.3 M227.8 1006.5 L222 1012.3" stroke="#2e4697" stroke-width="2.7" stroke-linecap="round"/>
<path d="M253.5 1003.5 Q253.5 1001.5 252 1001.5 Q250.5 1001.5 250.5 1003.5 V1014.5 Q250.5 1016 252.2 1016 H266.5 V1004.5 H253.8" fill="#eef2f8" stroke="#7a909a" stroke-width="1.1"/>
<path d="M255.5 1012 H264" stroke="#1e6fd0" stroke-width="1"/><path d="M255.5 1010.5 L258 1008.5 L260 1009.7 L263.5 1007.3" fill="none" stroke="#4a90e0" stroke-width="1"/>
<path d="M357.7 1006.5 L363.5 1012.3 M363.5 1006.5 L357.7 1012.3" stroke="#2e4697" stroke-width="2.7" stroke-linecap="round"/>
<g fill="#3a4fb8"><circle cx="393.5" cy="1003" r="1.3"/><circle cx="393.5" cy="1009" r="1.3"/><circle cx="393.5" cy="1015" r="1.3"/></g></svg>
<div class="a t" id="t0" style="left:758.3px;top:20.0px;font-size:12.5px;line-height:12.5px;color:#ffffff;font-weight:normal;transform:scaleX(0.9730);transform-origin:0 0;">Suchen...</div>
<div class="a t" id="t1" style="left:1063.3px;top:20.0px;font-size:12.5px;line-height:12.5px;color:#ffffff;font-weight:normal;transform:scaleX(0.9771);transform-origin:0 0;">Suchbereiche</div>
<div class="a t" id="t2" style="left:1778.0px;top:10.0px;font-size:12.5px;line-height:12.5px;color:#ffffff;font-weight:normal;transform:scaleX(1.0388);transform-origin:0 0;">Willkommen</div>
<div class="a t" id="t3" style="left:1777.3px;top:25.7px;font-size:16px;line-height:16px;color:#ffffff;font-weight:normal;transform:scaleX(0.9018);transform-origin:0 0;">Linda Grün</div>
<div class="a t" id="t4" style="left:1862px;top:19.0px;font-size:12.5px;line-height:12.5px;color:#2e4697;font-weight:bold;transform:scaleX(0.8929);transform-origin:0 0;">LG</div>
<div class="a t" id="t5" style="left:72.3px;top:63.0px;font-size:12.5px;line-height:12.5px;color:#ffffff;font-weight:normal;transform:scaleX(1.0201);transform-origin:0 0;">Mein Cockpit</div>
<div class="a t" id="t6" style="left:238.0px;top:63.0px;font-size:12.5px;line-height:12.5px;color:#1f1f1f;font-weight:normal;transform:scaleX(0.9507);transform-origin:0 0;">0000011, PRJ 00000...</div>
<div class="a t" id="t7" style="left:426.0px;top:63.0px;font-size:12.5px;line-height:12.5px;color:#ffffff;font-weight:normal;transform:scaleX(0.9907);transform-origin:0 0;">Geschäftspartner</div>
<div class="a t" id="t8" style="left:55.0px;top:95.5px;font-size:12.5px;line-height:12.5px;color:#1f1f1f;font-weight:normal;transform:scaleX(0.9837);transform-origin:0 0;">Verlauf:</div>
<div class="a t" id="t9" style="left:130.3px;top:95.5px;font-size:12.5px;line-height:12.5px;color:#1f1f1f;font-weight:normal;transform:scaleX(0.9974);transform-origin:0 0;">Standardsuche für Projekte f...</div>
<div class="a t" id="t10" style="left:343.3px;top:95.5px;font-size:12.5px;line-height:12.5px;color:#1f1f1f;font-weight:normal;transform:scaleX(0.9181);transform-origin:0 0;">PRJ 0000007, ZAEHLTAUSCH</div>
<div class="a t" id="t11" style="left:547.0px;top:95.5px;font-size:12.5px;line-height:12.5px;color:#1f1f1f;font-weight:normal;transform:scaleX(0.9725);transform-origin:0 0;">0000011, PRJ 0000007 - Net...</div>
<div class="a t" id="t12" style="left:79.3px;top:131.0px;font-size:12.5px;line-height:12.5px;color:#1f1f1f;font-weight:normal;transform:scaleX(1.0154);transform-origin:0 0;">Bearbeiten</div>
<div class="a t" id="t13" style="left:179.3px;top:131.0px;font-size:12.5px;line-height:12.5px;color:#1f1f1f;font-weight:normal;transform:scaleX(1.0018);transform-origin:0 0;">Speichern</div>
<div class="a t" id="t14" style="left:275.3px;top:131.0px;font-size:12.5px;line-height:12.5px;color:#1f1f1f;font-weight:normal;transform:scaleX(0.9986);transform-origin:0 0;">Speichern und schließen</div>
<div class="a t" id="t15" style="left:452.3px;top:131.0px;font-size:12.5px;line-height:12.5px;color:#1f1f1f;font-weight:normal;transform:scaleX(1.0154);transform-origin:0 0;">Neuanlage</div>
<div class="a t" id="t16" style="left:1631.7px;top:129.5px;font-size:13.5px;line-height:13.5px;color:#111;font-weight:bold;transform:scaleX(0.9101);transform-origin:0 0;">60%</div>
<div class="a t" id="t17" style="left:1820.3px;top:128.7px;font-size:15px;line-height:15px;color:#1f1f1f;font-weight:normal;transform:scaleX(1.2656);transform-origin:0 0;">2/2</div>
<div class="a t" id="t18" style="left:96.0px;top:166.5px;font-size:12.5px;line-height:12.5px;color:#1f1f1f;font-weight:normal;transform:scaleX(1.0088);transform-origin:0 0;">Vorgänge</div>
<div class="a t" id="t19" style="left:96.0px;top:182.7px;font-size:15px;line-height:15px;color:#1f1f1f;font-weight:normal;transform:scaleX(0.9490);transform-origin:0 0;">0000011, PRJ 0000007 - Netzanschluss nicht abgeschlossen</div>
<div class="a t" id="t20" style="left:79.3px;top:240.5px;font-size:12.5px;line-height:12.5px;color:#3b404e;font-weight:normal;transform:scaleX(1.0025);transform-origin:0 0;">Betreff</div>
<div class="a t" id="t21" style="left:217.3px;top:240.5px;font-size:12.5px;line-height:12.5px;color:#1f1f1f;font-weight:normal;transform:scaleX(0.9772);transform-origin:0 0;">PRJ 0000007 - Netzanschluss nicht abgeschlossen</div>
<div class="a t" id="t22" style="left:82.3px;top:308.5px;font-size:12.5px;line-height:12.5px;color:#141b33;font-weight:normal;transform:scaleX(0.8819);transform-origin:0 0;">ÜBERSICHT</div>
<div class="a t" id="t23" style="left:92.0px;top:352.0px;font-size:12.5px;line-height:12.5px;color:#3b404e;font-weight:normal;transform:scaleX(1.0135);transform-origin:0 0;">Vorgangsnummer</div>
<div class="a t" id="t24" style="left:231.0px;top:352.0px;font-size:12.5px;line-height:12.5px;color:#1f1f1f;font-weight:normal;transform:scaleX(0.9843);transform-origin:0 0;">0000011</div>
<div class="a t" id="t25" style="left:92.0px;top:384.0px;font-size:12.5px;line-height:12.5px;color:#3b404e;font-weight:normal;transform:scaleX(0.9426);transform-origin:0 0;">Typ</div>
<div class="a t" id="t26" style="left:247.3px;top:384.0px;font-size:12.5px;line-height:12.5px;color:#1f1f1f;font-weight:normal;transform:scaleX(0.9785);transform-origin:0 0;">Netzanschluss</div>
<div class="a t" id="t27" style="left:91.3px;top:416.3px;font-size:12.5px;line-height:12.5px;color:#3b404e;font-weight:normal;transform:scaleX(0.9792);transform-origin:0 0;">Status</div>
<div class="a t" id="t28" style="left:248.0px;top:416.3px;font-size:12.5px;line-height:12.5px;color:#1f1f1f;font-weight:normal;transform:scaleX(1.0442);transform-origin:0 0;">Offen</div>
<div class="a t" id="t29" style="left:91.3px;top:446.5px;font-size:12.5px;line-height:12.5px;color:#3b404e;font-weight:normal;transform:scaleX(1.0376);transform-origin:0 0;">Priorität</div>
<div class="a t" id="t30" style="left:247.3px;top:446.5px;font-size:12.5px;line-height:12.5px;color:#1f1f1f;font-weight:normal;transform:scaleX(1.0311);transform-origin:0 0;">Normale Priorität</div>
<div class="a t" id="t31" style="left:93.3px;top:488.5px;font-size:14.5px;line-height:14.5px;color:#1f1f1f;font-weight:normal;transform:scaleX(0.9984);transform-origin:0 0;">Beteiligte Personen</div>
<div class="a t" id="t32" style="left:93.3px;top:530.0px;font-size:12.5px;line-height:12.5px;color:#3b404e;font-weight:normal;transform:scaleX(1.0902);transform-origin:0 0;">Initiator</div>
<div class="a t" id="t33" style="left:255.97999999999996px;top:530.0px;font-size:12.5px;line-height:12.5px;color:#1f6fce;font-weight:normal;transform:scaleX(0.9895);transform-origin:0 0;">Linda Grün</div>
<div class="a t" id="t34" style="left:93.3px;top:562.4px;font-size:12.5px;line-height:12.5px;color:#3b404e;font-weight:normal;transform:scaleX(1.0100);transform-origin:0 0;">Delegiert an Gruppe</div>
<div class="a t" id="t35" style="left:232.3px;top:562.4px;font-size:12.5px;line-height:12.5px;color:#1f1f1f;font-weight:normal;transform:scaleX(1.0258);transform-origin:0 0;">Projektleiter</div>
<div class="a t" id="t36" style="left:81.3px;top:635.3px;font-size:12px;line-height:12px;color:#141b33;font-weight:normal;transform:scaleX(0.9309);transform-origin:0 0;">BESCHREIBUNG</div>
<div class="a t" id="t37" style="left:96.79px;top:683.2px;font-size:16px;line-height:16px;color:#1f1f1f;font-weight:normal;transform:scaleX(1.0278);transform-origin:0 0;">Der Netzanschluss ist noch nicht abgeschlossen.</div>
<div class="a t" id="t38" style="left:96.79px;top:705.2px;font-size:16px;line-height:16px;color:#1f1f1f;font-weight:normal;transform:scaleX(1.0365);transform-origin:0 0;">Die Bearbeitung des neuen Zählers kann noch</div>
<div class="a t" id="t39" style="left:96.79px;top:727.0px;font-size:16px;line-height:16px;color:#1f1f1f;font-weight:normal;transform:scaleX(1.0736);transform-origin:0 0;">nicht erfolgen.</div>
<div class="a t" id="t40" style="left:539.3px;top:308.5px;font-size:12px;line-height:12px;color:#141b33;font-weight:normal;transform:scaleX(0.9715);transform-origin:0 0;">KOMMENTARE</div>
<div class="a t" id="t41" style="left:663.0px;top:308.5px;font-size:12px;line-height:12px;color:#666a73;font-weight:normal;transform:scaleX(0.9588);transform-origin:0 0;">ANLIEGEN</div>
<div class="a t" id="t42" style="left:761.68px;top:308.5px;font-size:12px;line-height:12px;color:#666a73;font-weight:normal;transform:scaleX(0.9728);transform-origin:0 0;">ÄNDERUNGEN</div>
<div class="a t" id="t43" style="left:537px;top:362.8px;font-size:11px;line-height:11px;color:#ffffff;font-weight:normal;transform:scaleX(0.8398);transform-origin:0 0;">LGU</div>
<div class="a t" id="t44" style="left:584.3px;top:363.0px;font-size:12.5px;line-height:12.5px;color:#6e6e6e;font-weight:normal;transform:scaleX(0.9902);transform-origin:0 0;">Kommentar schreiben...</div>
<div class="a t" id="t45" style="left:538px;top:399.7px;font-size:13px;line-height:13px;color:#8a8a8a;font-weight:normal;transform:scaleX(0.9846);transform-origin:0 0;">@</div>
<div class="a t" id="t46" style="left:777.3px;top:525.7px;font-size:13px;line-height:13px;color:#333;font-weight:bold;transform:scaleX(0.9755);transform-origin:0 0;">Noch keine Kommentare</div>
<div class="a t" id="t47" style="left:553.3px;top:547.3px;font-size:12px;line-height:12px;color:#333;font-weight:normal;transform:scaleX(0.9449);transform-origin:0 0;">Schreiben Sie einen Kommentar, um eine Diskussion zu beginnen! Erwähnen Sie einen Mitarbeiter mit <span style="color:#2a2a8a">@KÜRZEL</span>, um</div>
<div class="a t" id="t48" style="left:793.3px;top:562.3px;font-size:12px;line-height:12px;color:#333;font-weight:normal;transform:scaleX(0.9721);transform-origin:0 0;">Ihn zu benachrichtigen</div>
<div class="a t" id="t49" style="left:787.3px;top:628.0px;font-size:13px;line-height:13px;color:#666;font-weight:normal;transform:scaleX(0.9423);transform-origin:0 0;">Sie können aber auch...</div>
<div class="a t" id="t50" style="left:709.15px;top:739.7px;font-size:13px;line-height:13px;color:#ffffff;font-weight:normal;transform:scaleX(0.9856);transform-origin:0 0;">Aktivität erstellen</div>
<div class="a t" id="t51" style="left:897.3px;top:739.7px;font-size:13px;line-height:13px;color:#ffffff;font-weight:normal;transform:scaleX(0.9559);transform-origin:0 0;">E-Mail versenden</div>
<div class="a t" id="t52" style="left:1218.3px;top:309.0px;font-size:12px;line-height:12px;color:#141b33;font-weight:normal;transform:scaleX(0.9339);transform-origin:0 0;">STATUS</div>
<div class="a t" id="t53" style="left:1259.0px;top:349.3px;font-size:13px;line-height:13px;color:#ffffff;font-weight:normal;transform:scaleX(1.0462);transform-origin:0 0;">Offen</div>
<div class="a t" id="t54" style="left:1395.3px;top:349.3px;font-size:13px;line-height:13px;color:#222;font-weight:bold;transform:scaleX(0.9800);transform-origin:0 0;">Laufend</div>
<div class="a t" id="t55" style="left:1539.62px;top:349.3px;font-size:13px;line-height:13px;color:#222;font-weight:bold;transform:scaleX(0.9784);transform-origin:0 0;">Beendet</div>
<div class="a t" id="t56" style="left:1218.81px;top:406.7px;font-size:12px;line-height:12px;color:#141b33;font-weight:normal;transform:scaleX(0.9341);transform-origin:0 0;">DETAILS</div>
<div class="a t" id="t57" style="left:1227.62px;top:451.0px;font-size:12.5px;line-height:12.5px;color:#3b404e;font-weight:normal;transform:scaleX(1.0116);transform-origin:0 0;">Fälligkeitsdatum</div>
<div class="a t" id="t58" style="left:1367.15px;top:451.0px;font-size:12.5px;line-height:12.5px;color:#1f1f1f;font-weight:normal;transform:scaleX(0.9826);transform-origin:0 0;">03.11.2025 um 15:39</div>
<div class="a t" id="t59" style="left:1227.62px;top:482.0px;font-size:12.5px;line-height:12.5px;color:#3b404e;font-weight:normal;transform:scaleX(1.0105);transform-origin:0 0;">Erinnerungsdatum</div>
<div class="a t" id="t60" style="left:1367.15px;top:482.0px;font-size:12.5px;line-height:12.5px;color:#1f1f1f;font-weight:normal;transform:scaleX(0.9749);transform-origin:0 0;">29.10.2025 um 15:39</div>
<div class="a t" id="t61" style="left:1227.62px;top:530.7px;font-size:12.5px;line-height:12.5px;color:#3b404e;font-weight:normal;transform:scaleX(0.9892);transform-origin:0 0;">Eingang</div>
<div class="a t" id="t62" style="left:1367.15px;top:530.7px;font-size:12.5px;line-height:12.5px;color:#1f1f1f;font-weight:normal;transform:scaleX(0.9749);transform-origin:0 0;">27.10.2025 um 15:39</div>
<div class="a t" id="t63" style="left:1687.32px;top:237.4px;font-size:15px;line-height:15px;color:#1f1f1f;font-weight:normal;transform:scaleX(0.9881);transform-origin:0 0;">Aktionen</div>
<div class="a t" id="t64" style="left:1726.5px;top:291.0px;font-size:12.5px;line-height:12.5px;color:#1f1f1f;font-weight:normal;transform:scaleX(0.9978);transform-origin:0 0;">Vorgangsmanagement</div>
<div class="a t" id="t65" style="left:1735.4px;top:329.0px;font-size:12.5px;line-height:12.5px;color:#1f1f1f;font-weight:normal;transform:scaleX(0.9902);transform-origin:0 0;">Vorgang abschließen</div>
<div class="a t" id="t66" style="left:1735.4px;top:363.0px;font-size:12.5px;line-height:12.5px;color:#1f1f1f;font-weight:normal;transform:scaleX(1.0203);transform-origin:0 0;">Anliegen hinzufügen</div>
<div class="a t" id="t67" style="left:1735.4px;top:396.0px;font-size:12.5px;line-height:12.5px;color:#a8a8a8;font-weight:normal;transform:scaleX(1.0187);transform-origin:0 0;">Vorgang wiedereröffnen</div>
<div class="a t" id="t68" style="left:1726.5px;top:434.2px;font-size:12.5px;line-height:12.5px;color:#1f1f1f;font-weight:normal;transform:scaleX(0.9995);transform-origin:0 0;">Compliance-Prüfung</div>
<div class="a t" id="t69" style="left:1726.5px;top:467.0px;font-size:12.5px;line-height:12.5px;color:#1f1f1f;font-weight:normal;transform:scaleX(1.0074);transform-origin:0 0;">Dienstbarkeiten</div>
<div class="a t" id="t70" style="left:76.0px;top:1004.3px;font-size:12px;line-height:12px;color:#141b33;font-weight:normal;transform:scaleX(0.9195);transform-origin:0 0;">GESCHÄFTSPARTNER (0)</div>
<div class="a t" id="t71" style="left:272.3px;top:1004.3px;font-size:12px;line-height:12px;color:#777;font-weight:normal;transform:scaleX(0.9059);transform-origin:0 0;">PROJEKTE (1)</div>
<div class="a t" id="t72" style="left:408.0px;top:1004.3px;font-size:12px;line-height:12px;color:#777;font-weight:normal;transform:scaleX(0.8881);transform-origin:0 0;">WEITERE BEREICHE</div>
<div class="a t" id="t73" style="left:11.2px;top:11.4px;font-size:26px;line-height:26px;color:#ffffff;font-weight:normal;transform:scaleX(0.9623);transform-origin:0 0;-webkit-text-stroke:0.75px #fff;">TINA</div>
<div class="a t" id="t74" style="left:1640.5px;top:16.9px;font-size:8.5px;line-height:8.5px;color:#ffffff;font-weight:normal;transform:scaleX(0.9505);transform-origin:0 0;">8</div>

</body></html>
